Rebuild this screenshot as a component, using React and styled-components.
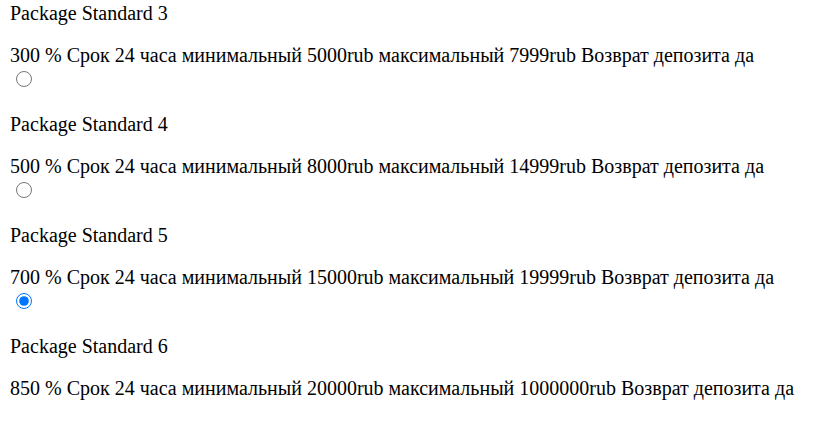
import { useState } from "react";
import styled, { createGlobalStyle } from "styled-components";

const packages = [
  { id: 3, percent: 300, min: 5000, max: 7999 },
  { id: 4, percent: 500, min: 8000, max: 14999 },
  { id: 5, percent: 700, min: 15000, max: 19999 },
  { id: 6, percent: 850, min: 20000, max: 1000000 },
];

function App() {
  const [selected, setSelected] = useState(5);

  return (
    <>
      <GlobalStyle />
      <List>
        {packages.map((pkg, i) => (
          <Item key={pkg.id}>
            <Title>Package Standard {pkg.id}</Title>
            <Desc>
              {pkg.percent} % Срок 24 часа минимальный {pkg.min}rub максимальный{" "}
              {pkg.max}rub Возврат депозита да
            </Desc>
            {i < packages.length - 1 && (
              <Radio
                type="radio"
                name="package"
                checked={selected === pkg.id}
                onChange={() => setSelected(pkg.id)}
              />
            )}
          </Item>
        ))}
      </List>
    </>
  );
}

export default App;

const GlobalStyle = createGlobalStyle`
  body {
    margin: 0;
    background: #ffffff;
    color: #000000;
    font-family: "Liberation Serif", "Times New Roman", serif;
    font-size: 20px;
  }
`;

const List = styled.div`
  display: flex;
  flex-direction: column;
  gap: 26px;
  padding: 2px 10px 0;
`;

const Item = styled.div`
  display: flex;
  flex-direction: column;
  align-items: flex-start;
`;

const Title = styled.p`
  margin: 0;
  line-height: 23px;
`;

const Desc = styled.p`
  margin: 19px 0 0;
  line-height: 23px;
  white-space: nowrap;
`;

const Radio = styled.input`
  width: 16px;
  height: 16px;
  margin: 4px 0 0 6px;
`;
